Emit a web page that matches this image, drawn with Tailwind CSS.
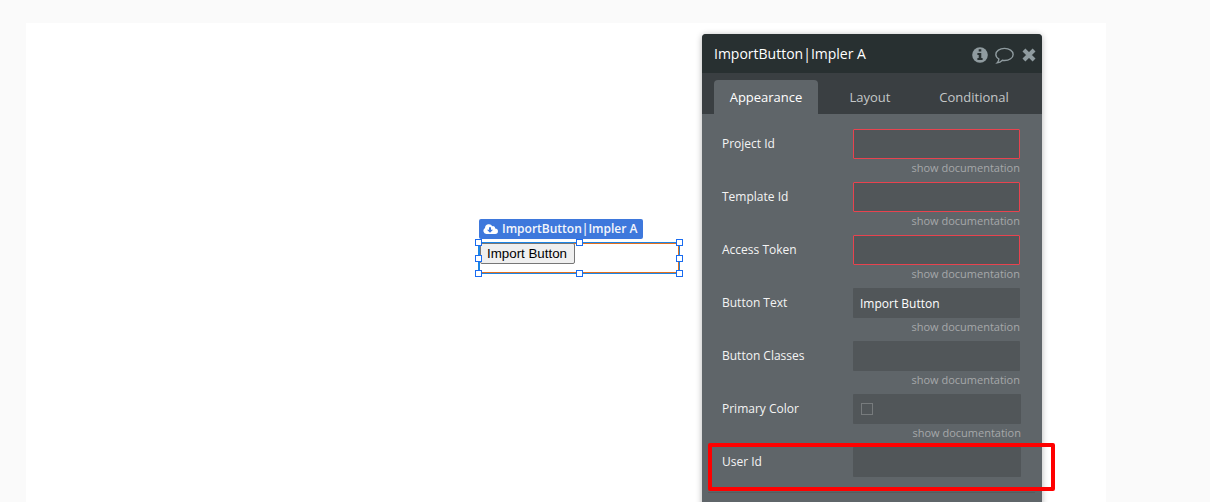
<!DOCTYPE html>
<html lang="en">
<head>
<meta charset="utf-8">
<title>Editor</title>
<script src="https://cdn.jsdelivr.net/npm/@tailwindcss/browser@4"></script>
</head>
<body class="relative h-[502px] w-[1210px] overflow-hidden bg-[#fafafa] font-['Open_Sans',sans-serif]">
<div class="ml-[26px] mt-[23px] h-[479px] w-[1080px] bg-white"></div>

<!-- Selected element on the canvas -->
<div class="absolute left-[479px] top-[219px] flex h-5 w-[164px] items-center gap-1 rounded-[2px] bg-[#3e78dc] pl-1 text-[12px] font-semibold whitespace-nowrap text-[#f4f6fb]">
  <svg class="h-[10px] w-[15px] shrink-0" viewBox="0 0 15 10"><path fill="#fff" d="M3.3 10A3.3 3.3 0 0 1 2 3.9 3.9 3.9 0 0 1 9.3 2.2 2.1 2.1 0 0 1 12.1 4.4 2.8 2.8 0 0 1 12.2 10Z"/><path fill="#3e78dc" d="M6 3.2h2v2.500h2L7 8.700 4 5.700h2Z"/></svg>
  <span>ImportButton|Impler A</span>
</div>
<div class="absolute left-[478px] top-[242px] h-[32px] w-[202px] border border-[#1b85e6]">
  <div class="h-full w-full border border-l-[#1b85e6] border-t-[#e2701f] border-r-[#e2701f] border-b-[#e2701f]">
    <div class="-mt-px flex h-[21px] w-[95px] items-center rounded-[2px] border border-[#767676] bg-[#efefef] pl-[6px] font-['Liberation_Sans',sans-serif] text-[13.333px] whitespace-nowrap text-black">Import Button</div>
  </div>
</div>
<div class="absolute left-[475px] top-[239px] size-[7px] border border-[#1a6cf0] bg-white"></div>
<div class="absolute left-[576px] top-[239px] size-[7px] border border-[#1a6cf0] bg-white"></div>
<div class="absolute left-[676px] top-[239px] size-[7px] border border-[#1a6cf0] bg-white"></div>
<div class="absolute left-[475px] top-[255px] size-[7px] border border-[#1a6cf0] bg-white"></div>
<div class="absolute left-[676px] top-[255px] size-[7px] border border-[#1a6cf0] bg-white"></div>
<div class="absolute left-[475px] top-[270px] size-[7px] border border-[#1a6cf0] bg-white"></div>
<div class="absolute left-[576px] top-[270px] size-[7px] border border-[#1a6cf0] bg-white"></div>
<div class="absolute left-[676px] top-[270px] size-[7px] border border-[#1a6cf0] bg-white"></div>

<!-- Property editor -->
<div class="absolute left-[702px] top-[34px] h-[480px] w-[340px] overflow-hidden rounded-[4px] bg-[#5f6569] text-[12px] text-[#f4f4f4] shadow-[0_1px_6px_rgba(0,0,0,0.3)]">
  <div class="flex h-[39px] items-center bg-[#283031] pr-[6px] pl-3">
    <div class="flex-1 text-[14px] text-white">ImportButton|Impler A</div>
    <svg class="mt-[2px] mr-[7px] size-[16px]" viewBox="0 0 16 16"><circle cx="8" cy="8" r="7.800" fill="#8f9b9f"/><path fill="#283031" d="M6.700 2.300h2.600v2.300H6.700zM5.400 6h3.900v5h1.300v1.900H5.400V11h1.300V7.900H5.400z"/></svg>
    <svg class="mt-[4px] mr-[8px] h-[17px] w-[19px]" viewBox="0 0 18 16" fill="none" stroke="#8f9b9f" stroke-width="1.300"><path d="M9 1.200c4.500 0 8.200 2.600 8.200 5.800S13.500 12.700 9 12.700q-1 0-2-.2Q5 14.600 2 15 3.500 13.500 3.700 11.300C2 10.300.8 8.700.8 7 .8 3.800 4.500 1.200 9 1.200Z"/></svg>
    <svg class="mt-[3px] size-[14px]" viewBox="0 0 13 13"><path d="M1.800 1.800l9.400 9.400M11.200 1.800l-9.400 9.400" stroke="#8f9b9f" stroke-width="3.800"/></svg>
  </div>
  <div class="flex h-[41px] items-end bg-[#3a3f42] px-3 text-[13px] text-[#c4c7c8]">
    <div class="flex h-[34px] w-[104px] items-center justify-center rounded-t-[4px] bg-[#5f6569] pt-[2px] text-white">Appearance</div>
    <div class="flex h-[34px] w-[104px] items-center justify-center pt-[2px]">Layout</div>
    <div class="flex h-[34px] w-[104px] items-center justify-center pt-[2px]">Conditional</div>
  </div>
  <div class="flex flex-col pt-[15px] pr-[22px] pl-5">
    <div class="flex h-[53px] justify-between"><div class="leading-[29px]">Project Id</div><div class="w-[167px]"><div class="h-[30px] rounded-[1px] border border-[#e8434f] bg-[#515659]"></div><div class="text-right text-[11px] leading-[18px] text-[#a6a8a9]">show documentation</div></div></div>
    <div class="flex h-[53px] justify-between"><div class="leading-[29px]">Template Id</div><div class="w-[167px]"><div class="h-[30px] rounded-[1px] border border-[#e8434f] bg-[#515659]"></div><div class="text-right text-[11px] leading-[18px] text-[#a6a8a9]">show documentation</div></div></div>
    <div class="flex h-[53px] justify-between"><div class="leading-[29px]">Access Token</div><div class="w-[167px]"><div class="h-[30px] rounded-[1px] border border-[#e8434f] bg-[#515659]"></div><div class="text-right text-[11px] leading-[18px] text-[#a6a8a9]">show documentation</div></div></div>
    <div class="flex h-[53px] justify-between"><div class="leading-[29px]">Button Text</div><div class="w-[167px]"><div class="h-[30px] rounded-[1px] bg-[#515659] pt-px pl-[7px] leading-[30px] text-white">Import Button</div><div class="text-right text-[11px] leading-[18px] text-[#a6a8a9]">show documentation</div></div></div>
    <div class="flex h-[53px] justify-between"><div class="leading-[29px]">Button Classes</div><div class="w-[167px]"><div class="h-[30px] rounded-[1px] bg-[#515659]"></div><div class="text-right text-[11px] leading-[18px] text-[#a6a8a9]">show documentation</div></div></div>
    <div class="-mr-px flex h-[53px] justify-between"><div class="leading-[29px]">Primary Color</div><div class="w-[168px]"><div class="flex h-[30px] items-center rounded-[1px] bg-[#515659] pl-2"><div class="size-3 border border-[#777b7d]"></div></div><div class="text-right text-[11px] leading-[18px] text-[#a6a8a9]">show documentation</div></div></div>
    <div class="-mr-px flex h-[45px] justify-between"><div class="leading-[29px]">User Id</div><div class="h-[30px] w-[168px] rounded-[1px] bg-[#515659]"></div></div>
    <div class="-mr-[15px] -ml-[14px] h-px bg-[#565c5f]"></div>
  </div>
</div>

<!-- Highlight around the User Id row -->
<div class="absolute left-[708px] top-[443px] h-[48px] w-[347px] rounded-[2px] border-4 border-[#ff0000]"></div>
</body>
</html>
